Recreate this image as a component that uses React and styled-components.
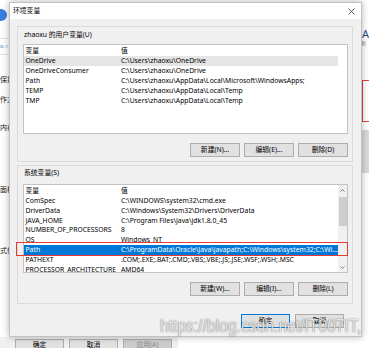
import React from "react";
import styled, { createGlobalStyle } from "styled-components";

const GlobalStyle = createGlobalStyle`
  html, body { margin: 0; padding: 0; }
  body { width: 369px; height: 348px; overflow: hidden; background: #fff; }
`;

const UI_FONT = `"Noto Sans", "Noto Sans CJK SC", sans-serif`;

const userVars = [
  { name: "OneDrive", value: String.raw`C:\Users\zhaoxu\OneDrive`, state: "inactive" },
  { name: "OneDriveConsumer", value: String.raw`C:\Users\zhaoxu\OneDrive` },
  { name: "Path", value: String.raw`C:\Users\zhaoxu\AppData\Local\Microsoft\WindowsApps;` },
  { name: "TEMP", value: String.raw`C:\Users\zhaoxu\AppData\Local\Temp` },
  { name: "TMP", value: String.raw`C:\Users\zhaoxu\AppData\Local\Temp` },
];

const systemVars = [
  { name: "ComSpec", value: String.raw`C:\WINDOWS\system32\cmd.exe` },
  { name: "DriverData", value: String.raw`C:\Windows\System32\Drivers\DriverData` },
  { name: "JAVA_HOME", value: String.raw`C:\Program Files\Java\jdk1.8.0_45` },
  { name: "NUMBER_OF_PROCESSORS", value: "8" },
  { name: "OS", value: "Windows_NT" },
  { name: "Path", value: String.raw`C:\ProgramData\Oracle\Java\javapath;C:\Windows\system32;C:\Wi...`, state: "active" },
  { name: "PATHEXT", value: ".COM;.EXE;.BAT;.CMD;.VBS;.VBE;.JS;.JSE;.WSF;.WSH;.MSC" },
  { name: "PROCESSOR_ARCHITECTURE", value: "AMD64" },
];

const leftFragments = [
  { text: "保护", mt: 21 },
  { text: "作方", mt: 12 },
  { text: "内存", mt: 20 },
  { text: "面板", mt: 54 },
  { text: "式信", mt: 53 },
];

const EnvDialogApp = () => {
  return (
    <>
      <GlobalStyle />
      <Desktop>
        <BackWindow>
          <BackMain>
            <LeftStrip>
              <Avatar />
              <StripDivider $mt={17} />
              <StripIcons>o ⌕</StripIcons>
              <StripDivider $mt={4} />
              {leftFragments.map((f) => (
                <StripText key={f.text} $mt={f.mt}>{f.text}</StripText>
              ))}
            </LeftStrip>
            <BackSpacer />
            <RightStrip>
              <BigGlyph>A</BigGlyph>
              <TinyText>新</TinyText>
              <RedFrame />
              <GreyBlock />
            </RightStrip>
          </BackMain>
          <BackFooter>
            <BackButtons>
              <BackButton>确定</BackButton>
              <BackButton>取消</BackButton>
              <BackButton $disabled>应用(A)</BackButton>
            </BackButtons>
          </BackFooter>
        </BackWindow>

        <Dialog>
          <TitleBar>
            <Title>环境变量</Title>
            <CloseIcon width="7" height="7" viewBox="0 0 7 7">
              <path d="M0.5 0.5 L6.5 6.5 M6.5 0.5 L0.5 6.5" stroke="#333" strokeWidth="0.8" />
            </CloseIcon>
          </TitleBar>
          <DialogBody>
            <Panel $pt={3} $pb={4}>
              <GroupLabel>zhaoxu 的用户变量(U)</GroupLabel>
              <ListBox $mt={4} $h={90}>
                <Rows>
                  <Row $h={11}>
                    <NameCell>变量</NameCell>
                    <ValueCell>值</ValueCell>
                  </Row>
                  {userVars.map((v) => (
                    <Row key={v.name} $h={10} $state={v.state}>
                      <NameCell>{v.name}</NameCell>
                      <ValueCell>{v.value}</ValueCell>
                    </Row>
                  ))}
                </Rows>
              </ListBox>
              <ButtonRow>
                <Button>新建(N)...</Button>
                <Button>编辑(E)...</Button>
                <Button>删除(D)</Button>
              </ButtonRow>
            </Panel>
            <Panel $pt={2} $pb={7} $mt={3}>
              <GroupLabel>系统变量(S)</GroupLabel>
              <ListBox $mt={6} $h={89}>
                <Rows>
                  <Row $h={11}>
                    <NameCell>变量</NameCell>
                    <ValueCell>值</ValueCell>
                  </Row>
                  {systemVars.map((v) => (
                    <Row key={v.name} $h={9.8} $state={v.state}>
                      <NameCell>{v.name}</NameCell>
                      <ValueCell>{v.value}</ValueCell>
                    </Row>
                  ))}
                </Rows>
                <ScrollBar>
                  <ScrollArrow>
                    <svg width="5" height="3" viewBox="0 0 5 3">
                      <path d="M0.5 2.5 L2.5 0.5 L4.5 2.5" fill="none" stroke="#606060" strokeWidth="0.8" />
                    </svg>
                  </ScrollArrow>
                  <ScrollTrack>
                    <Thumb />
                  </ScrollTrack>
                  <ScrollArrow>
                    <svg width="5" height="3" viewBox="0 0 5 3">
                      <path d="M0.5 0.5 L2.5 2.5 L4.5 0.5" fill="none" stroke="#606060" strokeWidth="0.8" />
                    </svg>
                  </ScrollArrow>
                </ScrollBar>
              </ListBox>
              <ButtonRow>
                <Button>新建(W)...</Button>
                <Button>编辑(I)...</Button>
                <Button>删除(L)</Button>
              </ButtonRow>
            </Panel>
            <DialogFooter>
              <Button $default $w={49}>确定</Button>
              <Button $w={49}>取消</Button>
            </DialogFooter>
          </DialogBody>
        </Dialog>

        <Annotation />
        <Watermark>https://blog.csdn.net/IT007IT,</Watermark>
      </Desktop>
    </>
  );
};

export default EnvDialogApp;

//-----------------------------------------------STYLES-----------------------------------------------/
const Desktop = styled.div`
  position: relative;
  width: 369px;
  height: 348px;
  overflow: hidden;
  background: #fff;
  font-family: ${UI_FONT};
  font-size: 6.8px;
  color: #000;
`;

const BackWindow = styled.div`
  display: flex;
  flex-direction: column;
  height: 100%;
`;

const BackMain = styled.div`
  flex: 1;
  display: flex;
`;

const LeftStrip = styled.div`
  width: 14px;
  display: flex;
  flex-direction: column;
`;

const Avatar = styled.div`
  width: 12px;
  height: 12px;
  margin: 9px 0 0 -5px;
  border-radius: 50%;
  background: #3a7ee0;
`;

const StripDivider = styled.div`
  height: 1px;
  margin-top: ${(p) => p.$mt}px;
  background: #e4e4e4;
`;

const StripIcons = styled.div`
  margin-top: 3px;
  height: 8px;
  line-height: 8px;
  font-size: 6px;
  color: #3f7fd4;
`;

const StripText = styled.div`
  margin-top: ${(p) => p.$mt}px;
  height: 8px;
  line-height: 8px;
  font-size: 7px;
  white-space: nowrap;
  color: #222;
`;

const BackSpacer = styled.div`
  flex: 1;
`;

const RightStrip = styled.div`
  width: 8px;
  display: flex;
  flex-direction: column;
`;

const BigGlyph = styled.div`
  margin-top: 28px;
  height: 11px;
  line-height: 11px;
  font-size: 11px;
  color: #2d4f85;
  padding-left: 1px;
`;

const TinyText = styled.div`
  margin-top: 2px;
  height: 5px;
  line-height: 5px;
  font-size: 5px;
  white-space: nowrap;
  color: #777;
`;

const RedFrame = styled.div`
  margin: 34px 0 0 1px;
  height: 40px;
  border: 1px solid #e8403a;
  border-right: none;
`;

const GreyBlock = styled.div`
  margin-top: 8px;
  height: 43px;
  background: #dadada;
`;

const BackFooter = styled.div`
  height: 11px;
  display: flex;
`;

const BackButtons = styled.div`
  width: 178px;
  display: flex;
  gap: 5px;
  padding: 2px 0 0 15px;
  box-sizing: border-box;
  background: #f0f0f0;
`;

const BackButton = styled.div`
  width: 49px;
  height: 12px;
  box-sizing: border-box;
  border: 1px solid #adadad;
  background: ${(p) => (p.$disabled ? "#cccccc" : "#e1e1e1")};
  color: ${(p) => (p.$disabled ? "#8a8a8a" : "#000")};
  text-align: center;
  line-height: 10px;
  font-size: 6.8px;
`;

const Dialog = styled.div`
  position: absolute;
  left: 9px;
  top: 2px;
  width: 353px;
  height: 335px;
  box-sizing: border-box;
  display: flex;
  flex-direction: column;
  background: #f0f0f0;
  border: 1px solid #c2c2c2;
  box-shadow: 0 0 7px rgba(0, 0, 0, 0.3);
`;

const TitleBar = styled.div`
  height: 16px;
  display: flex;
  align-items: center;
  justify-content: space-between;
  padding: 0 6px 0 3px;
  background: #fff;
`;

const Title = styled.div`
  font-size: 6.8px;
  line-height: 10px;
`;

const CloseIcon = styled.svg`
  display: block;
`;

const DialogBody = styled.div`
  display: flex;
  flex-direction: column;
  padding: 7px 8px 0 7px;
`;

const Panel = styled.div`
  display: flex;
  flex-direction: column;
  margin-top: ${(p) => p.$mt || 0}px;
  padding: ${(p) => p.$pt}px 4px ${(p) => p.$pb}px 5px;
  border: 1px solid #dadada;
`;

const GroupLabel = styled.div`
  height: 10px;
  line-height: 10px;
  padding-left: 1px;
  white-space: nowrap;
`;

const ListBox = styled.div`
  margin-top: ${(p) => p.$mt}px;
  height: ${(p) => p.$h}px;
  box-sizing: border-box;
  display: flex;
  overflow: hidden;
  background: #fff;
  border: 1px solid #c3c3c3;
`;

const Rows = styled.div`
  width: 314px;
  display: flex;
  flex-direction: column;
`;

const Row = styled.div`
  flex: none;
  height: ${(p) => p.$h}px;
  line-height: ${(p) => p.$h}px;
  display: flex;
  white-space: nowrap;
  background: ${(p) =>
    p.$state === "active" ? "#0078d7" : p.$state === "inactive" ? "#e5e5e5" : "transparent"};
  color: ${(p) => (p.$state === "active" ? "#fff" : "#000")};
`;

const NameCell = styled.div`
  width: 97px;
  padding-left: 1.5px;
  box-sizing: border-box;
  overflow: hidden;
`;

const ValueCell = styled.div`
  flex: 1;
  overflow: hidden;
  text-overflow: ellipsis;
`;

const ScrollBar = styled.div`
  width: 9px;
  display: flex;
  flex-direction: column;
  background: #f0f0f0;
`;

const ScrollArrow = styled.div`
  height: 10px;
  display: flex;
  align-items: center;
  justify-content: center;
`;

const ScrollTrack = styled.div`
  flex: 1;
  display: flex;
  justify-content: center;
`;

const Thumb = styled.div`
  width: 8px;
  height: 29px;
  margin-top: 2px;
  background: #cdcdcd;
`;

const ButtonRow = styled.div`
  margin-top: 9px;
  display: flex;
  justify-content: flex-end;
  gap: 4px;
`;

const Button = styled.div`
  width: ${(p) => p.$w || 50}px;
  height: 14px;
  box-sizing: border-box;
  border: 1px solid ${(p) => (p.$default ? "#0078d7" : "#adadad")};
  background: #e1e1e1;
  text-align: center;
  line-height: 12px;
  white-space: nowrap;
`;

const DialogFooter = styled.div`
  margin-top: 10px;
  padding-right: 9px;
  display: flex;
  justify-content: flex-end;
  gap: 5px;
`;

const Annotation = styled.div`
  position: absolute;
  left: 16px;
  top: 242px;
  width: 332px;
  height: 14px;
  box-sizing: border-box;
  border: 1.5px solid #e53935;
`;

const Watermark = styled.div`
  position: absolute;
  left: 160px;
  top: 315px;
  font-family: "Liberation Sans", Arial, sans-serif;
  font-size: 18px;
  line-height: 22px;
  white-space: nowrap;
  color: rgba(255, 255, 255, 0.85);
  text-shadow: 0 0 1px rgba(0, 0, 0, 0.55), 0 0 2px rgba(0, 0, 0, 0.25);
  transform: scaleX(0.87);
  transform-origin: left center;
  pointer-events: none;
`;
